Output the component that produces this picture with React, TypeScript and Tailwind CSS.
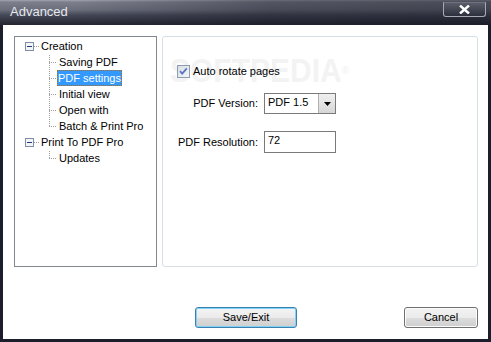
import React from "react";

const font = "font-['Liberation_Sans',Arial,sans-serif]";

function MinusBox() {
  return (
    <svg width="9" height="9" viewBox="0 0 9 9" className="shrink-0">
      <rect x="0.5" y="0.5" width="8" height="8" fill="#f4f4f4" stroke="#7a8ea8" />
      <line x1="2" y1="4.5" x2="7" y2="4.5" stroke="#24377c" />
    </svg>
  );
}

function TreeLines() {
  const dots: React.ReactElement[] = [];
  const v = (x: number, y1: number, y2: number) => {
    for (let y = y1; y <= y2; y += 2) dots.push(<rect key={`v${x}-${y}`} x={x} y={y} width="1" height="1" fill="#a0a0a0" />);
  };
  const h = (y: number, x1: number, x2: number) => {
    for (let x = x1; x <= x2; x += 2) dots.push(<rect key={`h${y}-${x}`} x={x} y={y} width="1" height="1" fill="#a0a0a0" />);
  };
  v(34, 18, 88);
  [25, 41, 57, 73, 89].forEach((y) => h(y, 34, 41));
  v(34, 114, 120);
  h(121, 34, 41);
  h(9, 19, 23);
  h(105, 19, 23);
  return (
    <svg className="absolute left-0 top-0" width="141" height="229">
      {dots}
    </svg>
  );
}

function Checkbox() {
  return (
    <svg width="13" height="13" viewBox="0 0 13 13" className="shrink-0">
      <defs>
        <linearGradient id="cbg" x1="0" y1="0" x2="1" y2="1">
          <stop offset="0" stopColor="#d8dde6" />
          <stop offset="1" stopColor="#f6f7f9" />
        </linearGradient>
      </defs>
      <rect x="0.5" y="0.5" width="12" height="12" fill="url(#cbg)" stroke="#8e9cb0" />
      <path d="M3 6.2 L5.2 8.6 L9.8 3.4" fill="none" stroke="#5a78c2" strokeWidth="1.8" />
    </svg>
  );
}

export default function App() {
  const childRows = ["Saving PDF", "PDF settings", "Initial view", "Open with", "Batch & Print Pro"];
  return (
    <div className={`w-[491px] h-[342px] flex flex-col bg-[#1c1e2b] ${font} text-[11px] text-black`}>
      <div className="h-[25px] flex items-start relative bg-[linear-gradient(to_bottom,#a3a6b0_0px,#7d808c_2px,#6a6d7a_10px,#454856_15px,#262834_24px)]">
        <div className="absolute inset-0 bg-[linear-gradient(to_right,rgba(0,0,0,0)_0%,rgba(0,0,0,0)_15%,rgba(20,22,34,0.4)_55%,rgba(20,22,34,0.5)_100%)]" />
        <span className="relative ml-[10px] mt-[4px] text-[13px] leading-[16px] text-[#e6e8ee]">
          Advanced
        </span>
        <div className="relative ml-auto mr-[5px] mt-[2px] w-[43px] h-[15px] rounded-b-[3px] border border-[#a7aab4] border-t-[#6e7180] bg-[linear-gradient(to_bottom,#5a5d6a,#2c2f3c)] flex items-center justify-center">
          <svg width="11" height="9" viewBox="0 0 11 9">
            <path d="M1 0.5 L10 8.5 M10 0.5 L1 8.5" stroke="#ffffff" strokeWidth="2.4" />
          </svg>
        </div>
      </div>
      <div className="flex-1 mx-[3px] mb-[3px] bg-white flex flex-col pl-[11px] pr-[10px] pt-[11px]">
        <div className="flex gap-[5px] h-[231px]">
          <div className="w-[143px] h-full border border-[#828790] relative pt-[1px]">
            <TreeLines />
            <div className="relative flex flex-col">
              <div className="h-[16px] flex items-center">
                <div className="ml-[10px]"><MinusBox /></div>
                <span className="ml-[7px]">Creation</span>
              </div>
              {childRows.map((r) => (
                <div key={r} className="h-[16px] flex items-center pl-[42px]">
                  {r === "PDF settings" ? (
                    <span className="bg-[#3399ff] text-white px-[1px] h-[16px] leading-[14px] outline-1 outline-dotted outline-[#b06a12] -outline-offset-1 flex items-center">
                      {r}
                    </span>
                  ) : (
                    <span className="px-[2px]">{r}</span>
                  )}
                </div>
              ))}
              <div className="h-[16px] flex items-center">
                <div className="ml-[10px]"><MinusBox /></div>
                <span className="ml-[7px]">Print To PDF Pro</span>
              </div>
              <div className="h-[16px] flex items-center pl-[42px]">
                <span className="px-[2px]">Updates</span>
              </div>
            </div>
          </div>
          <div className="flex-1 h-full border border-[#d5dfe5] rounded-[3px] relative">
            <div className="absolute left-[7px] top-[17px] text-[30px] font-bold leading-[30px] text-[#f3f3f3] scale-y-[1.1] origin-top-left select-none pointer-events-none">
              SOFTPEDIA<span className="text-[10px] align-top">®</span>
            </div>
            <div className="relative flex flex-col pt-[28px]">
              <div className="flex items-center ml-[14px] h-[13px]">
                <Checkbox />
                <span className="ml-[3px]">Auto rotate pages</span>
              </div>
              <div className="grid grid-cols-[95px_72px] gap-x-[6px] gap-y-[17px] mt-[15px] items-center">
                <span className="text-right">PDF Version:</span>
                <div className="h-[21px] border border-[#7a7a7a] flex items-stretch bg-white">
                  <span className="flex-1 pl-[3px] leading-[16px]">PDF 1.5</span>
                  <div className="w-[17px] bg-[linear-gradient(to_bottom,#f0f0f0,#d6d6d6)] border-l border-[#b0b0b0] flex items-center justify-center">
                    <svg width="7" height="4" viewBox="0 0 7 4">
                      <path d="M0 0 H7 L3.5 4 Z" fill="#000" />
                    </svg>
                  </div>
                </div>
                <span className="text-right">PDF Resolution:</span>
                <div className="h-[22px] border border-[#7a7a7a] bg-white pl-[3px] leading-[16px]">72</div>
              </div>
            </div>
          </div>
        </div>
        <div className="flex mt-[40px]">
          <button className="ml-[181px] w-[102px] h-[21px] rounded-[3px] border border-[#3c7fb1] shadow-[inset_0_0_0_1px_#7fd4f5] bg-[linear-gradient(to_bottom,#f4f4f4_0%,#ebebeb_50%,#dcdcdc_51%,#cfcfcf_100%)] text-[11px] leading-none">
            Save/Exit
          </button>
          <button className="ml-auto w-[74px] h-[21px] rounded-[3px] border border-[#707070] shadow-[inset_0_0_0_1px_#fcfcfc] bg-[linear-gradient(to_bottom,#f2f2f2_0%,#ebebeb_50%,#dddddd_51%,#cfcfcf_100%)] text-[11px] leading-none">
            Cancel
          </button>
        </div>
      </div>
    </div>
  );
}
